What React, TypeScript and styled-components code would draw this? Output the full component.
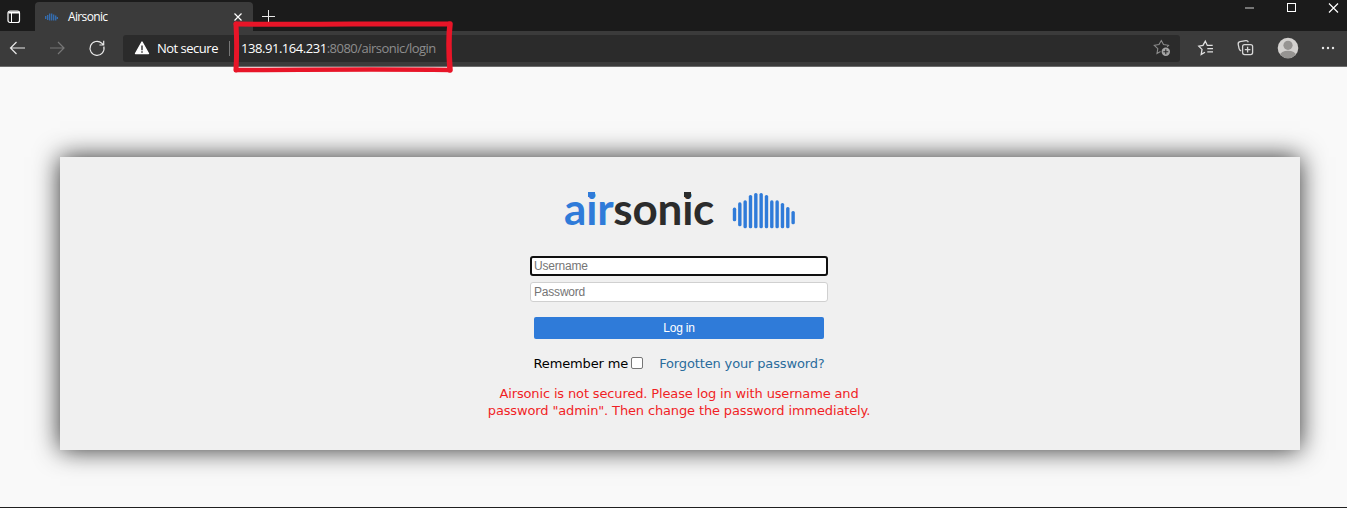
import React from 'react';
import styled, { createGlobalStyle } from 'styled-components';

const ui = '"Open Sans", "Noto Sans", sans-serif';

const GlobalStyle = createGlobalStyle`
  * { box-sizing: border-box; }
  body { margin: 0; background: #f9f9f9; }
`;

const Window = styled.div`
  position: relative;
  display: flex;
  flex-direction: column;
  width: 1347px;
  height: 508px;
  overflow: hidden;
  background: #f9f9f9;
  border-bottom: 1px solid #202020;
`;

const TitleBar = styled.header`
  display: flex;
  height: 31px;
  background: #1b1b1b;
  color: #fff;
`;

const TabMenu = styled.div`
  width: 35px;
  padding: 10px 0 0 7px;
  svg { display: block; }
`;

const Tab = styled.div`
  display: flex;
  align-items: center;
  width: 218px;
  height: 29px;
  margin-top: 2px;
  padding: 0 10px;
  border-radius: 4px 4px 0 0;
  background: #3b3b3b;
  svg { display: block; }
`;

const TabTitle = styled.span`
  flex: 1;
  margin-left: 10px;
  font: 12px/16px ${ui};
  letter-spacing: -0.65px;
`;

const NewTab = styled.div`
  padding: 10px 0 0 9px;
`;

const Caption = styled.div`
  display: flex;
  gap: 31px;
  margin: 2px 8px 0 auto;
`;

const Toolbar = styled.div`
  display: flex;
  align-items: center;
  height: 36px;
  padding-right: 9px;
  background: #3b3b3b;
  border-bottom: 1px solid #6c6c6c;
  svg { display: block; flex: none; margin-top: -1px; }
`;

const NavIcons = styled.div`
  display: flex;
  gap: 20px;
  width: 123px;
  padding-left: 7px;
`;

const AddressBar = styled.div`
  display: flex;
  align-items: center;
  width: 1057px;
  height: 27px;
  padding: 0 7px 0 11px;
  border-radius: 3px;
  background: #2b2b2b;
  font: 13px/18px ${ui};
`;

const Security = styled.span`
  width: 72px;
  margin: -1px 0 0 7px;
  color: #fff;
  letter-spacing: -0.5px;
  white-space: nowrap;
`;

const Separator = styled.span`
  width: 1px;
  height: 15px;
  margin-right: 11px;
  background: #777;
`;

const Url = styled.span`
  flex: 1;
  margin-top: -1px;
  color: #8e8e8e;
  letter-spacing: -0.52px;
`;

const Host = styled.span`
  color: #fff;
  letter-spacing: -0.45px;
`;

const ToolIcons = styled.div`
  display: flex;
  align-items: center;
  justify-content: space-between;
  flex: 1;
  margin-left: 17px;
  padding-right: 3px;
`;

const Highlight = styled.svg`
  position: absolute;
  left: 230px;
  top: 16px;
`;

const Page = styled.main`
  flex: 1;
  padding: 90px 47px 0 60px;
`;

const Card = styled.form`
  display: flex;
  flex-direction: column;
  align-items: center;
  height: 293px;
  padding: 26px 2px 0 0;
  background: #f0f0f0;
  box-shadow: 0 0 24px rgba(0, 0, 0, 0.82);
  color: #000;
  font: 13px/17px Verdana, "DejaVu Sans", sans-serif;
  letter-spacing: -0.14px;
`;

const Brand = styled.div`
  display: flex;
  align-items: flex-start;
  width: 230px;
  height: 48px;
  svg { flex: none; margin-top: 10px; }
`;

const Wordmark = styled.div`
  flex: none;
  width: 167px;
  color: #2c2c2c;
  font: 700 44px/50px Lato, sans-serif;
  letter-spacing: -0.2px;
  white-space: nowrap;
`;

const Air = styled.span`
  color: #2f7bd9;
`;

/* The wordmark's i carries a square tittle. */
const SquareI = styled.span`
  position: relative;
  &::before {
    content: '';
    position: absolute;
    left: 2px;
    top: 10px;
    width: 7px;
    height: 5px;
    background: currentColor;
  }
`;

const Field = styled.input<{ $active?: boolean }>`
  display: block;
  width: 298px;
  height: 20px;
  margin: 0 0 ${p => (p.$active ? '6px' : '5px')};
  padding: 0 3px;
  border: ${p => (p.$active ? '2px solid #101010' : '1px solid #d0d0d0')};
  padding-left: ${p => (p.$active ? '2px' : '3px')};
  border-radius: 3px;
  outline: none;
  background: #fff;
  font: 12px/16px "Liberation Sans", Arial, sans-serif;
  letter-spacing: -0.2px;
  &::placeholder { color: #757575; }
`;

const Fields = styled.div`
  margin-top: 25px;
`;

const Submit = styled.button`
  width: 290px;
  height: 22px;
  margin: 10px 0 0;
  padding: 0;
  border: 0;
  border-radius: 2px;
  background: #2f7bd9;
  color: #fff;
  font: 12px/22px "Liberation Sans", Arial, sans-serif;
  letter-spacing: -0.2px;
`;

const Options = styled.div`
  display: flex;
  align-items: center;
  width: 291px;
  height: 17px;
  margin-top: 16px;
  white-space: nowrap;
`;

const Check = styled.input`
  appearance: none;
  flex: none;
  width: 12px;
  height: 12px;
  margin: 0 16px 1px 3px;
  border: 1px solid #767676;
  border-radius: 2px;
  background: #fff;
`;

const Forgot = styled.a`
  color: #2a6c9c;
`;

const Warning = styled.p`
  margin: 13px 0 0;
  color: #f01f26;
  text-align: center;
`;

const bars = [
  [207.3, 221], [202, 226], [200, 228], [194.7, 228], [192.7, 228], [192.7, 228],
  [194.7, 228], [200, 228], [200, 228], [202.7, 228], [206.7, 228], [210.7, 224],
];

const Waves = () => (
  <svg width="66" height="36">
    {bars.map(([top, bottom], i) => (
      <rect key={i} x={1.8 + i * 5.33} y={top - 192.7} width="3.4" height={bottom - top} rx="1.6" fill="#2f7bd9" />
    ))}
  </svg>
);

export default function App() {
  return (
    <>
      <GlobalStyle />
      <Window>
        <TitleBar>
          <TabMenu>
            <svg width="14" height="14" fill="none" stroke="#fff">
              <rect x="1" y="1" width="11.5" height="11.5" rx="2" strokeWidth="1.2" />
              <path d="M1.5 2.5h11" strokeWidth="2" /><path d="M4.5 3v9" />
            </svg>
          </TabMenu>
          <Tab>
            <svg width="13" height="8" stroke="#3570b5" strokeWidth="1.3">
              <path d="M.7 3v3M2.7 2v5M4.7 .5v7M6.7 .5v7M8.7 1.5v6M10.7 2.5v5M12.4 4v2" />
            </svg>
            <TabTitle>Airsonic</TabTitle>
            <svg width="10" height="10" stroke="#fff" strokeWidth="1.2"><path d="M1.5 1.5l7 7M8.5 1.5l-7 7" /></svg>
          </Tab>
          <NewTab>
            <svg width="14" height="14" stroke="#e8e8e8"><path d="M0 6.5h13M6.5 0v13" /></svg>
          </NewTab>
          <Caption>
            <svg width="11" height="12"><path d="M1 6h9" stroke="#b5b5b5" strokeWidth="1.2" /></svg>
            <svg width="11" height="12"><rect x="1.5" y="1.5" width="8" height="8" fill="none" stroke="#fff" /></svg>
            <svg width="11" height="12"><path d="M1 1.5l9 9M10 1.5l-9 9" stroke="#fff" strokeWidth="1.2" /></svg>
          </Caption>
        </TitleBar>
        <Toolbar>
          <NavIcons>
            <svg width="20" height="20" fill="none" stroke="#e8e8e8" strokeWidth="1.2"><path d="M18 10H4M9.5 4L3.5 10l6 6" /></svg>
            <svg width="20" height="20" fill="none" stroke="#777" strokeWidth="1.2"><path d="M3 10h14M11 4l6 6-6 6" /></svg>
            <svg width="20" height="20" fill="none" stroke="#e8e8e8" strokeWidth="1.2"><path d="M16.8 8.5A7 7 0 1 1 14.8 5.2L16.5 7M16.7 2.7V7h-4.3" /></svg>
          </NavIcons>
          <AddressBar>
            <svg width="16" height="16">
              <path d="M8 2L14.5 13.5h-13z" fill="#fff" stroke="#fff" strokeWidth="1.4" strokeLinejoin="round" />
              <path d="M8 5.5v4.7M8 11.3v1.5" stroke="#2b2b2b" strokeWidth="1.4" />
            </svg>
            <Security>Not secure</Security>
            <Separator />
            <Url><Host>138.91.164.231</Host>:8080/airsonic/login</Url>
            <svg width="20" height="20" fill="none" stroke="#8c8c8c" strokeWidth="1.1">
              <path d="M7.5 13.5l-3.5 2 .8-4.8L1.3 7.3l4.7-.7L8.3 2.6l2.2 4 5 .7-1.3 1.5" />
              <circle cx="12.8" cy="13.7" r="4.2" fill="#a5a5a5" stroke="none" />
              <path d="M12.8 11.2v5M10.3 13.7h5" stroke="#2b2b2b" />
            </svg>
          </AddressBar>
          <ToolIcons>
            <svg width="18" height="18" fill="none" stroke="#e0e0e0" strokeWidth="1.3">
              <path d="M8 13.2l-3.8 2.2.8-5-3.2-3.3 4.2-.7L8.3 2.1l2 4.3h5.4M10.3 9.6h5.7M10.3 12.8h5.7" />
            </svg>
            <svg width="18" height="18" fill="none" stroke="#d6d6d6" strokeWidth="1.3">
              <path d="M4.2 12C2.8 11.5 2.3 10.8 2.1 9.7L1.2 5.3C1 3.9 1.6 3 3 2.7l5.8-1.1c1.2-.2 2.1.3 2.5 1.7" />
              <rect x="5.6" y="5.6" width="10" height="10" rx="2" /><path d="M10.6 7.8v5.6M7.8 10.6h5.6" />
            </svg>
            <svg width="22" height="22">
              <defs><clipPath id="avatar"><circle cx="11" cy="11" r="10.3" /></clipPath></defs>
              <g clipPath="url(#avatar)">
                <path fill="#d3d1cf" d="M0 0h22v22H0z" /><circle cx="11" cy="8.3" r="4.6" fill="#969492" />
                <ellipse cx="11" cy="18.5" rx="8" ry="4.8" fill="#969492" />
              </g>
            </svg>
            <svg width="14" height="6" fill="#e8e8e8"><circle cx="2" cy="3" r="1.2" /><circle cx="7" cy="3" r="1.2" /><circle cx="12" cy="3" r="1.2" /></svg>
          </ToolIcons>
        </Toolbar>
        <Page>
          <Card>
            <Brand>
              <Wordmark><Air>a<SquareI>i</SquareI>r</Air>son<SquareI>i</SquareI>c</Wordmark>
              <Waves />
            </Brand>
            <Fields>
              <Field $active placeholder="Username" />
              <Field placeholder="Password" />
            </Fields>
            <Submit type="button">Log in</Submit>
            <Options>
              Remember me<Check type="checkbox" /><Forgot>Forgotten your password?</Forgot>
            </Options>
            <Warning>Airsonic is not secured. Please log in with username and<br />password "admin". Then change the password immediately.</Warning>
          </Card>
        </Page>
        <Highlight width="226" height="60" fill="none" stroke="#e81528" strokeLinecap="round">
          <path d="M6 8C70 9 150 7.5 219 8" strokeWidth="5" />
          <path d="M220 8C218 25 219 40 220 54" strokeWidth="5.5" />
          <path d="M220 54C140 53 70 54 6 54" strokeWidth="4.5" />
          <path d="M6 54C7 35 7 25 6 8" strokeWidth="5" />
        </Highlight>
      </Window>
    </>
  );
}
